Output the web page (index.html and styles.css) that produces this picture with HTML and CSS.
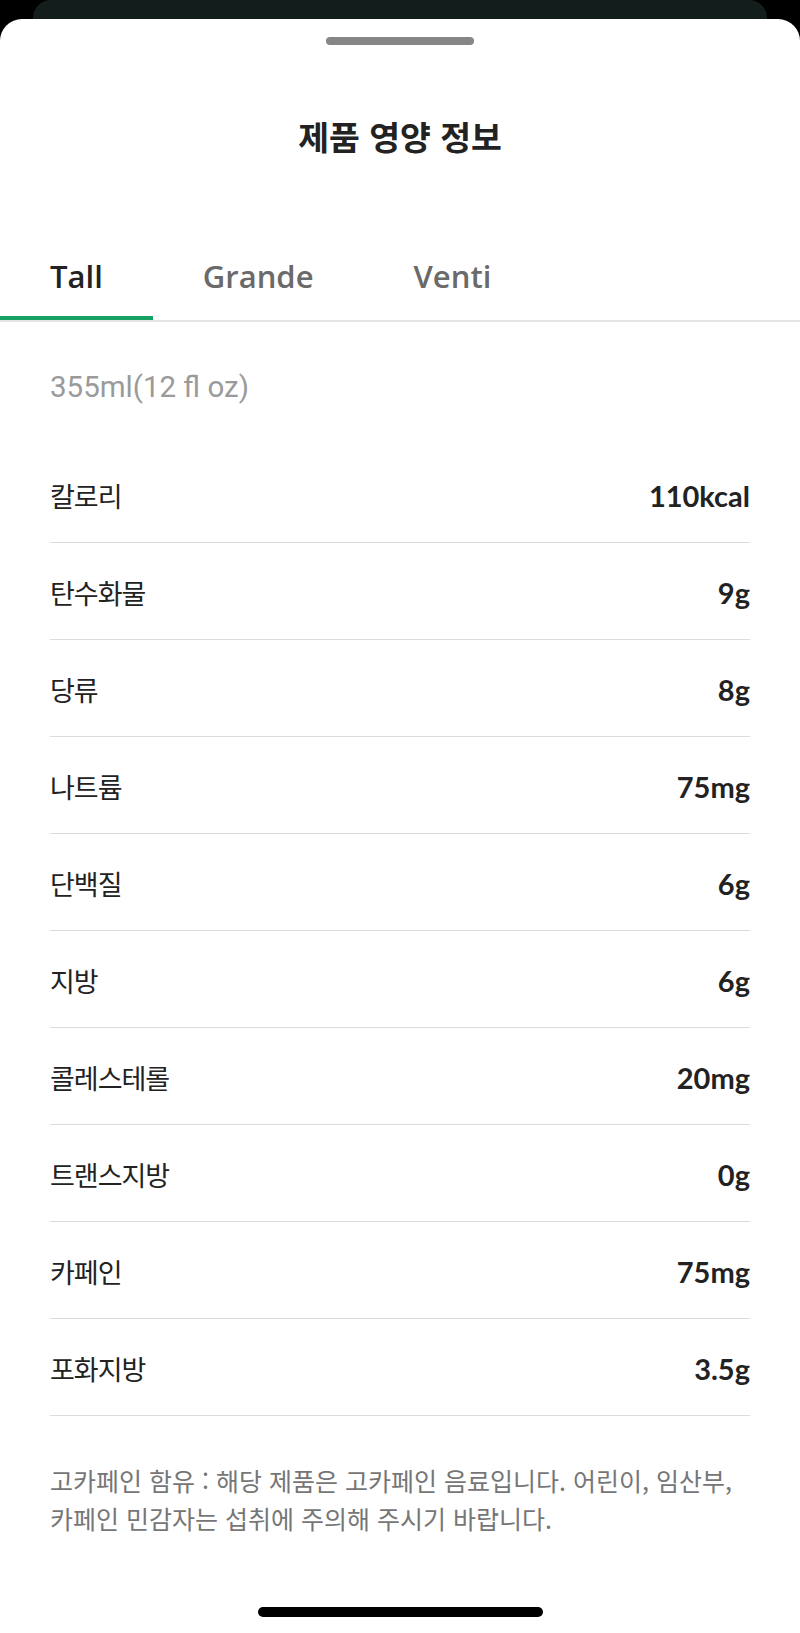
FILE: index.html
```html
<!DOCTYPE html>
<html lang="ko">
<head>
<meta charset="utf-8">
<title>제품 영양 정보</title>
<link rel="stylesheet" href="styles.css">
</head>
<body>
<div class="backcard"></div>
<div class="sheet">
  <div class="handle"></div>
  <h1 class="title">제품 영양 정보</h1>
  <div class="tabs">
    <div class="tab active">Tall</div>
    <div class="tab">Grande</div>
    <div class="tab">Venti</div>
  </div>
  <div class="content">
    <div class="volume">355ml(12 fl oz)</div>
    <ul class="rows">
      <li class="row"><span class="label">칼로리</span><span class="value">110kcal</span></li>
      <li class="row"><span class="label">탄수화물</span><span class="value">9g</span></li>
      <li class="row"><span class="label">당류</span><span class="value">8g</span></li>
      <li class="row"><span class="label">나트륨</span><span class="value">75mg</span></li>
      <li class="row"><span class="label">단백질</span><span class="value">6g</span></li>
      <li class="row"><span class="label">지방</span><span class="value">6g</span></li>
      <li class="row"><span class="label">콜레스테롤</span><span class="value">20mg</span></li>
      <li class="row"><span class="label">트랜스지방</span><span class="value">0g</span></li>
      <li class="row"><span class="label">카페인</span><span class="value">75mg</span></li>
      <li class="row"><span class="label">포화지방</span><span class="value">3.5g</span></li>
    </ul>
    <p class="notice">고카페인 함유 : 해당 제품은 고카페인 음료입니다. 어린이, 임산부, 카페인 민감자는 섭취에 주의해 주시기 바랍니다.</p>
  </div>
  <div class="home-indicator"></div>
</div>
</body>
</html>
```

FILE: styles.css
```css
* {
  box-sizing: border-box;
}

html, body {
  margin: 0;
  padding: 0;
  background: #000;
}

body {
  width: 800px;
  height: 1633px;
  overflow: hidden;
  font-family: "Noto Sans CJK KR", "Noto Sans", sans-serif;
  color: #222;
}

.backcard {
  height: 19px;
  margin: 0 33px;
  background: #131e1c;
  border-radius: 18px 18px 0 0;
}

.sheet {
  background: #fff;
  border-radius: 22px 22px 0 0;
  height: 1614px;
  padding-top: 18px;
  display: flex;
  flex-direction: column;
}

.handle {
  width: 148px;
  height: 8px;
  border-radius: 4px;
  background: #868686;
  align-self: center;
}

.title {
  margin: 71px 0 0;
  text-align: center;
  font-size: 33.5px;
  line-height: 40px;
  font-weight: 700;
  letter-spacing: 0;
  color: #222;
}

.tabs {
  margin-top: 100px;
  display: flex;
  border-bottom: 2px solid #e3e3e3;
}

.tab {
  padding: 0 50px 20px;
  font-family: "Open Sans", sans-serif;
  font-size: 31px;
  line-height: 40px;
  font-weight: 600;
  color: #6a6a6a;
  border-bottom: 4px solid transparent;
}

.tab.active {
  color: #222;
  border-bottom-color: #17a264;
}

.content {
  padding: 0 50px;
}

.volume {
  margin-top: 50px;
  font-family: Roboto, sans-serif;
  font-size: 29.5px;
  line-height: 30px;
  color: #9a9a9a;
}

.rows {
  list-style: none;
  margin: 44px 0 0;
  padding: 0;
}

.row {
  display: flex;
  justify-content: space-between;
  align-items: center;
  padding: 35px 0 31px;
  border-bottom: 1px solid #dcdcdc;
  line-height: 30px;
}

.label {
  font-size: 27px;
  letter-spacing: -1px;
  color: #222;
}

.value {
  font-family: Lato, sans-serif;
  font-weight: 700;
  font-size: 29px;
  color: #222;
}

.notice {
  margin: 45px 0 0;
  font-size: 25px;
  line-height: 38px;
  letter-spacing: 0;
  word-break: keep-all;
  color: #767676;
}

.home-indicator {
  margin: auto auto 16px;
  width: 285px;
  height: 10px;
  border-radius: 5px;
  background: #000;
}
```
